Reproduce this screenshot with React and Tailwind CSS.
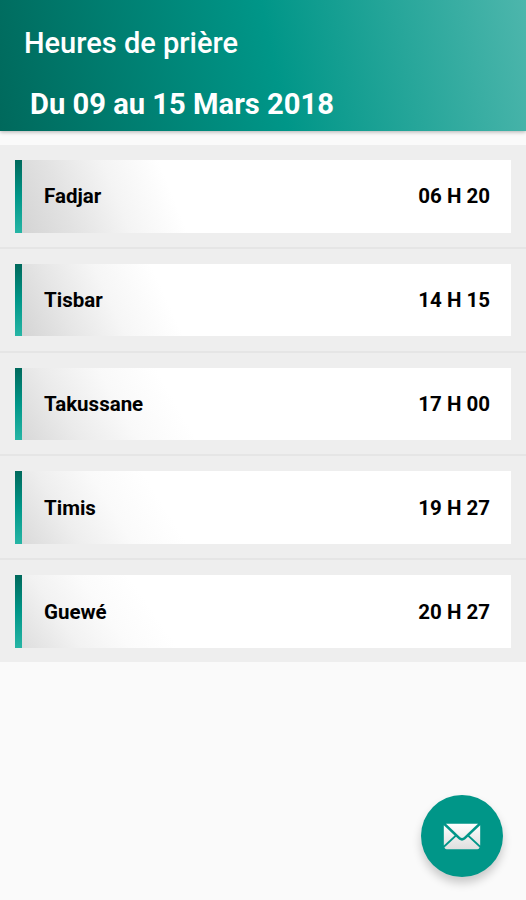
import React from 'react';

const prayers = [
  { name: 'Fadjar', time: '06 H 20', fade: 'bg-[linear-gradient(68deg,#d4d4d4_0%,#e2e2e2_10%,#f4f4f4_21%,#ffffff_32%)]' },
  { name: 'Tisbar', time: '14 H 15', fade: 'bg-[linear-gradient(65deg,#d4d4d4_0%,#e6e6e6_10%,#f6f6f6_20%,#ffffff_31%)]' },
  { name: 'Takussane', time: '17 H 00', fade: 'bg-[linear-gradient(60deg,#d8d8d8_0%,#ebebeb_11%,#f9f9f9_22%,#ffffff_33%)]' },
  { name: 'Timis', time: '19 H 27', fade: 'bg-[linear-gradient(58deg,#dadada_0%,#eeeeee_11%,#fafafa_21%,#ffffff_31%)]' },
  { name: 'Guewé', time: '20 H 27', fade: 'bg-[linear-gradient(55deg,#dedede_0%,#f2f2f2_11%,#fbfbfb_20%,#ffffff_29%)]' },
];

const Header = () => (
  <header className="relative h-[130.5px] pt-[27px] text-white bg-[linear-gradient(78deg,#00695c_0%,#009688_52%,#4db6ac_100%)] shadow-[0_1px_4px_rgba(0,0,0,0.3)]">
    <h1 className="pl-6 text-[29px] leading-[33px] font-medium">Heures de prière</h1>
    <p className="pl-[30px] pt-[27px] text-[29.15px] leading-[34px] font-bold">Du 09 au 15 Mars 2018</p>
  </header>
);

const PrayerRow = ({ name, time, fade }) => (
  <li className="h-[101.8px] pt-[15px] px-[15px] bg-[#eeeeee]">
    <div className="flex h-[72.5px]">
      <div className="w-[7px] bg-[linear-gradient(180deg,#00695c_0%,#009688_50%,#26b5a5_100%)]" />
      <div className={`flex flex-1 items-center justify-between pt-px pl-[22px] pr-[21px] text-[20.5px] font-bold text-black ${fade}`}>
        <span>{name}</span>
        <span>{time}</span>
      </div>
    </div>
  </li>
);

/* Mail icon, light grey envelope */
const Envelope = () => (
  <svg viewBox="0 0 38 27" className="w-[38px] h-[27px]">
    <defs>
      <linearGradient id="paper" x1="0" y1="0" x2="0" y2="27" gradientUnits="userSpaceOnUse">
        <stop offset="0" stopColor="#ffffff" />
        <stop offset="1" stopColor="#dedede" />
      </linearGradient>
    </defs>
    <g fill="url(#paper)">
      <path d="M3 0.8H35L20.8 14.2Q19 15.7 17.2 14.2Z" />
      <path d="M0.8 2.2L11.6 12.4L0.8 22.4Z" />
      <path d="M37.2 2.2L26.4 12.4L37.2 22.4Z" />
      <path d="M13 13.8L16 16.5Q19 18.8 22 16.5L25 13.8L36.6 24.6Q36 26.2 34.5 26.2H3.5Q2 26.2 1.4 24.6Z" />
    </g>
  </svg>
);

const App = () => {
  return (
    <div className="relative w-[526px] h-[900px] overflow-hidden bg-[#fafafa] font-[Roboto,sans-serif]">
      <Header />
      <ul className="mt-[14.5px] flex flex-col gap-[2px] bg-[#e5e5e5]">
        {prayers.map((prayer) => (
          <PrayerRow key={prayer.name} {...prayer} />
        ))}
      </ul>

      {/* Floating action button */}
      <button className="absolute left-[421px] top-[795px] w-[82px] h-[82px] rounded-full bg-[#009688] flex items-center justify-center shadow-[0_6px_10px_rgba(0,0,0,0.2)]">
        <Envelope />
      </button>
    </div>
  );
};

export default App;
